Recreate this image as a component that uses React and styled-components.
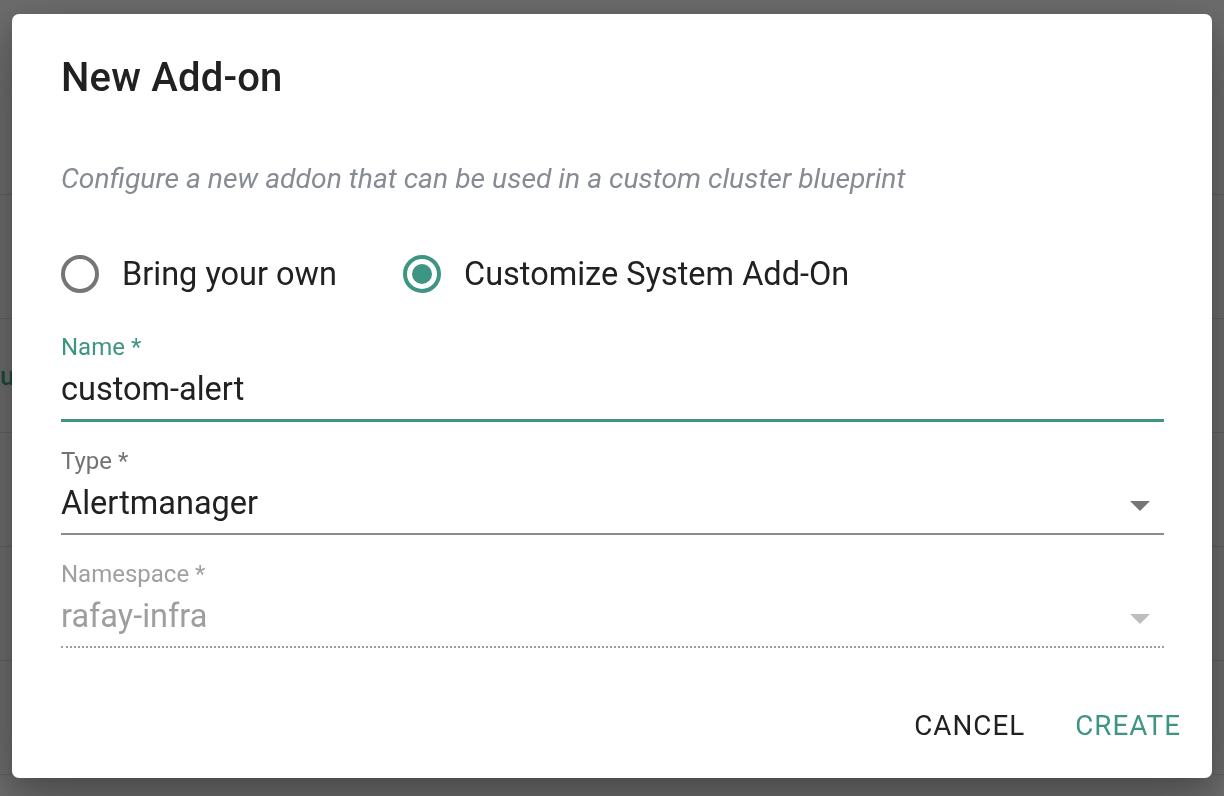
import React from 'react';
import styled, { createGlobalStyle } from 'styled-components';

const GlobalStyle = createGlobalStyle`
  html, body {
    margin: 0;
    padding: 0;
    width: 100%;
    height: 100%;
    overflow: hidden;
    background: #6c6c6c;
    font-family: Roboto, "Noto Sans", "Liberation Sans", sans-serif;
  }
`;

const TEAL = '#3f9583';

// page that sits behind the dimmed backdrop
const Page = styled.div`
  width: 100%;
  height: 796px;
  background: #6d6d6d;
  padding-top: 81px;
  box-sizing: border-box;
`;

const BgRow = styled.div`
  height: ${p => p.$h || 114}px;
  border-bottom: 1px solid #616161;
  box-sizing: border-box;
  display: flex;
  align-items: center;
  color: #1c4a42;
  font-size: 26px;
  font-weight: 500;
`;

const Overlay = styled.div`
  position: fixed;
  inset: 0;
  padding-bottom: 4px;
  display: flex;
  align-items: center;
  justify-content: center;
`;

const Dialog = styled.div`
  width: 1200px;
  height: 764px;
  box-sizing: border-box;
  background: #fff;
  border-radius: 7px;
  box-shadow: 0 22px 70px 6px rgba(0, 0, 0, 0.22), 0 10px 26px rgba(0, 0, 0, 0.18);
  padding: 34px 48px 0 49px;
  display: flex;
  flex-direction: column;
`;

const Title = styled.h2`
  margin: 0;
  font-size: 40px;
  font-weight: 500;
  line-height: 60px;
  color: #212121;
  letter-spacing: 0.2px;
`;

const Subtitle = styled.p`
  margin: 48px 0 0;
  font-size: 28.3px;
  font-style: italic;
  line-height: 45px;
  color: #878c94;
`;

const RadioRow = styled.div`
  margin-top: 43px;
  height: 60px;
  display: flex;
  align-items: center;
  gap: 66px;
`;

const RadioOption = styled.label`
  display: flex;
  align-items: center;
  gap: 23px;
  font-size: 32.5px;
  color: #212121;
`;

const RadioCircle = styled.span`
  width: 38px;
  height: 38px;
  box-sizing: border-box;
  border-radius: 50%;
  border: 4px solid ${p => (p.checked ? TEAL : '#767676')};
  display: flex;
  align-items: center;
  justify-content: center;

  &::after {
    content: '';
    width: 20px;
    height: 20px;
    border-radius: 50%;
    background: ${TEAL};
    display: ${p => (p.checked ? 'block' : 'none')};
  }
`;

const Field = styled.div`
  margin-top: ${p => p.$top}px;
`;

const Label = styled.div`
  font-size: 24px;
  line-height: 26px;
  color: ${p => p.$color};
`;

const InputRow = styled.div`
  margin-top: 11px;
  padding-bottom: 12px;
  display: flex;
  align-items: center;
  justify-content: space-between;
  border-bottom: ${p => p.$line};
`;

const Value = styled.div`
  font-size: 32.5px;
  line-height: 36px;
  color: ${p => p.$color};
`;

const Arrow = styled.svg`
  width: 20px;
  height: 10px;
  margin-right: 14px;
  margin-top: 6px;
  fill: ${p => p.$color};
`;

const Actions = styled.div`
  margin-top: 58px;
  margin-right: -33px;
  display: flex;
  justify-content: flex-end;
  gap: 18px;
`;

const Button = styled.button`
  border: none;
  background: none;
  padding: 0 16px;
  font-family: inherit;
  font-size: 27.8px;
  line-height: 40px;
  letter-spacing: 1px;
  text-transform: uppercase;
  color: ${p => (p.$primary ? TEAL : '#212121')};
  cursor: pointer;
`;

const DropArrow = ({ color }) => (
  <Arrow $color={color} viewBox="0 0 20 10">
    <path d="M0 0 L20 0 L10 10 Z" />
  </Arrow>
);

const App = () => {
  return (
    <>
      <GlobalStyle />
      <Page>
        <BgRow />
        <BgRow $h={124} />
        <BgRow>u</BgRow>
        <BgRow />
        <BgRow />
        <BgRow />
      </Page>
      <Overlay>
        <Dialog>
          <Title>New Add-on</Title>
          <Subtitle>Configure a new addon that can be used in a custom cluster blueprint</Subtitle>
          <RadioRow>
            <RadioOption>
              <RadioCircle />
              Bring your own
            </RadioOption>
            <RadioOption>
              <RadioCircle checked />
              Customize System Add-On
            </RadioOption>
          </RadioRow>

          <Field $top={30}>
            <Label $color={TEAL}>Name *</Label>
            <InputRow $line={`3px solid ${TEAL}`}>
              <Value $color="#212121">custom-alert</Value>
            </InputRow>
          </Field>

          <Field $top={26}>
            <Label $color="#737373">Type *</Label>
            <InputRow $line="2px solid #8c8c8c">
              <Value $color="#212121">Alertmanager</Value>
              <DropArrow color="#757575" />
            </InputRow>
          </Field>

          <Field $top={26}>
            <Label $color="#a0a0a0">Namespace *</Label>
            <InputRow $line="2px dotted #9e9e9e">
              <Value $color="#9e9e9e">rafay-infra</Value>
              <DropArrow color="#bdbdbd" />
            </InputRow>
          </Field>

          <Actions>
            <Button>Cancel</Button>
            <Button $primary>Create</Button>
          </Actions>
        </Dialog>
      </Overlay>
    </>
  );
};

export default App;
